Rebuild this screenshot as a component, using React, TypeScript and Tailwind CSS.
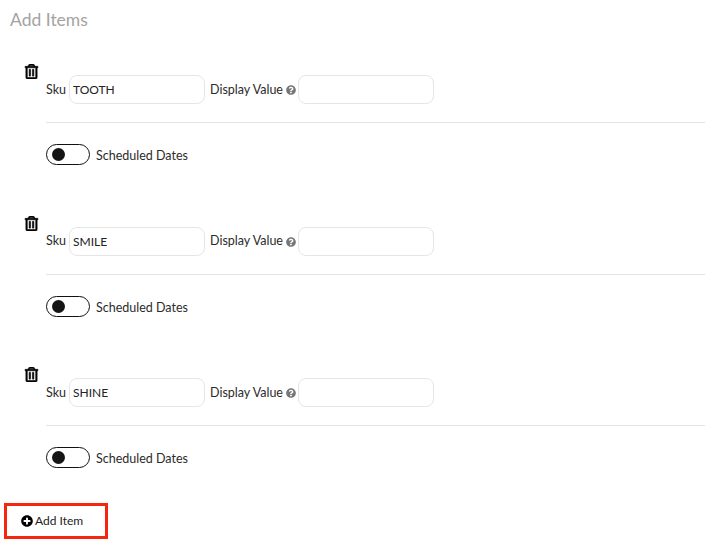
import { FaPlusCircle, FaQuestionCircle, FaRegTrashAlt } from "react-icons/fa"

function ItemRow({ sku }: { sku: string }) {
  return (
    <div className="pl-[24px] h-[151.5px]">
      <FaRegTrashAlt className="text-[15px] text-black stroke-[20px] stroke-black" />
      <div className="pl-[22px] mt-[-4px]">
        <div className="flex items-center h-[29px] text-[12.5px] text-[#2b2b2b]">
          <span className="w-[23px] pt-px">Sku</span>
          <input
            readOnly
            value={sku}
            className="w-[136px] h-[29px] rounded-lg border border-[#e6e6e6] px-[3px] text-[12px] text-[#222] outline-none"
          />
          <span className="ml-[5px] pt-px">Display Value</span>
          <FaQuestionCircle className="ml-[3px] mt-px text-[10px] text-[#777]" />
          <input
            readOnly
            className="ml-[2px] w-[136px] h-[29px] rounded-lg border border-[#e6e6e6] outline-none"
          />
        </div>
        <div className="mt-[18px] border-t border-[#e4e4e4]" />
        <div className="mt-[21px] flex items-center gap-[6px]">
          <div className="w-[44px] h-[21px] rounded-full border border-[#111] bg-white flex items-center pl-[5px]">
            <div className="w-[13px] h-[13px] rounded-full bg-[#151515]" />
          </div>
          <span className="text-[12.5px] leading-[19px] pt-[2px] text-[#2b2b2b]">Scheduled Dates</span>
        </div>
      </div>
    </div>
  )
}

export default function App() {
  return (
    <div className="w-[705px] h-[542px] overflow-hidden bg-white font-['Lato',sans-serif]">
      <h2 className="pl-[10px] pt-[7px] h-[64px] text-[17.5px] leading-[25px] text-[#a3a3a3]">Add Items</h2>
      {["TOOTH", "SMILE", "SHINE"].map((sku) => (
        <ItemRow key={sku} sku={sku} />
      ))}
      <div className="ml-[4px] mt-[-16px] w-[104px] h-[36px] border-[3px] border-[#f5260d] flex items-center pl-[14px] gap-[2px] text-[12px] text-[#222]">
        <FaPlusCircle className="text-[12px] text-black" />
        Add Item
      </div>
    </div>
  )
}
